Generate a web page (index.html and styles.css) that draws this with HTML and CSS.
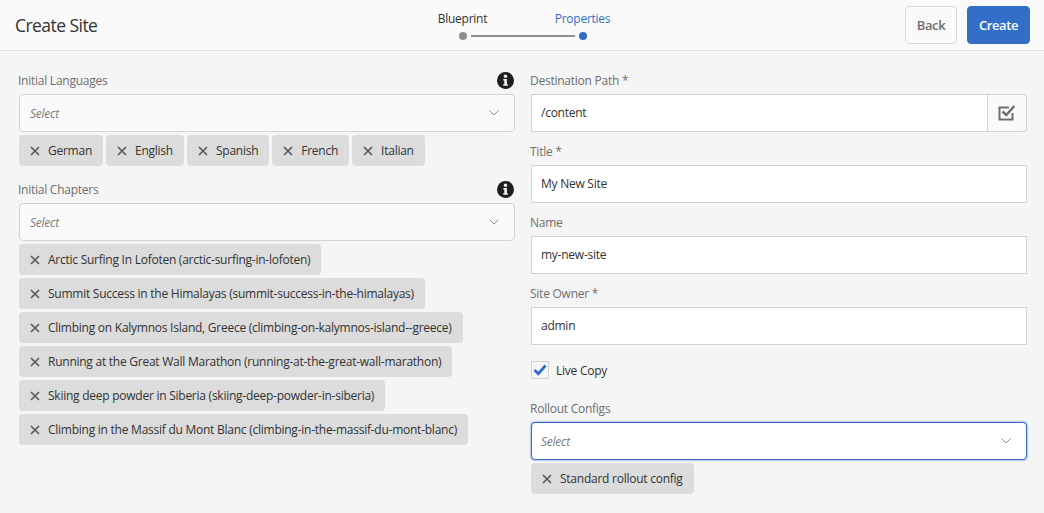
FILE: index.html
```html
<!DOCTYPE html>
<html lang="en">
<head>
    <meta charset="UTF-8">
    <meta name="viewport" content="width=device-width, initial-scale=1.0">
    <title>Create Site</title>
    <link rel="stylesheet" href="styles.css">
</head>
<body>
    <svg class="sprites" width="0" height="0">
        <symbol id="x" viewBox="0 0 10 10"><path d="M1 1l8 8M9 1l-8 8" fill="none" stroke="currentColor" stroke-width="1.7"/></symbol>
        <symbol id="chevron" viewBox="0 0 10 6"><path d="M.5 .5L5 5 9.5 .5" fill="none" stroke="currentColor" stroke-width="1"/></symbol>
        <symbol id="info" viewBox="0 0 17 17"><circle cx="8.5" cy="8.5" r="8.5" fill="currentColor"/><circle cx="8.5" cy="4.3" r="1.7" fill="#f5f5f5"/><path d="M6.3 7h3.6v5.2h1v1.5H6.2v-1.5h1.1V8.5h-1z" fill="#f5f5f5"/></symbol>
    </svg>

    <header class="topbar">
        <h1 class="title">Create Site</h1>
        <div class="stepper">
            <div class="step">
                <span class="step-label">Blueprint</span>
                <span class="dot"></span>
            </div>
            <span class="step-line"></span>
            <div class="step active">
                <span class="step-label">Properties</span>
                <span class="dot"></span>
            </div>
        </div>
        <div class="actions">
            <button class="btn">Back</button>
            <button class="btn primary">Create</button>
        </div>
    </header>

    <main class="form">
        <section class="col">
            <div class="field-head">
                <label>Initial Languages</label>
                <svg class="info"><use href="#info"/></svg>
            </div>
            <div class="select">
                <span>Select</span>
                <svg class="chevron"><use href="#chevron"/></svg>
            </div>
            <div class="tags">
                <span class="tag"><svg class="x"><use href="#x"/></svg>German</span>
                <span class="tag"><svg class="x"><use href="#x"/></svg>English</span>
                <span class="tag"><svg class="x"><use href="#x"/></svg>Spanish</span>
                <span class="tag"><svg class="x"><use href="#x"/></svg>French</span>
                <span class="tag"><svg class="x"><use href="#x"/></svg>Italian</span>
            </div>

            <div class="field-head chapters">
                <label>Initial Chapters</label>
                <svg class="info"><use href="#info"/></svg>
            </div>
            <div class="select">
                <span>Select</span>
                <svg class="chevron"><use href="#chevron"/></svg>
            </div>
            <div class="tags">
                <span class="tag"><svg class="x"><use href="#x"/></svg>Arctic Surfing In Lofoten (arctic-surfing-in-lofoten)</span>
                <span class="tag"><svg class="x"><use href="#x"/></svg>Summit Success in the Himalayas (summit-success-in-the-himalayas)</span>
                <span class="tag"><svg class="x"><use href="#x"/></svg>Climbing on Kalymnos Island, Greece (climbing-on-kalymnos-island--greece)</span>
                <span class="tag"><svg class="x"><use href="#x"/></svg>Running at the Great Wall Marathon (running-at-the-great-wall-marathon)</span>
                <span class="tag"><svg class="x"><use href="#x"/></svg>Skiing deep powder in Siberia (skiing-deep-powder-in-siberia)</span>
                <span class="tag"><svg class="x"><use href="#x"/></svg>Climbing in the Massif du Mont Blanc (climbing-in-the-massif-du-mont-blanc)</span>
            </div>
        </section>

        <section class="col">
            <div class="field">
                <div class="field-head"><label>Destination Path *</label></div>
                <div class="path-group">
                    <div class="input">/content</div>
                    <button class="path-btn">
                        <svg width="18" height="16" viewBox="0 0 18 16"><path d="M14.500 8V14.500H1.500V2.500H11" fill="none" stroke="#6e6e6e" stroke-width="2"/><path d="M4.500 6.500l3.800 3.500 8-9" fill="none" stroke="#6e6e6e" stroke-width="2.400"/></svg>
                    </button>
                </div>
            </div>
            <div class="field">
                <div class="field-head"><label>Title *</label></div>
                <div class="input">My New Site</div>
            </div>
            <div class="field">
                <div class="field-head"><label>Name</label></div>
                <div class="input">my-new-site</div>
            </div>
            <div class="field">
                <div class="field-head"><label>Site Owner *</label></div>
                <div class="input">admin</div>
            </div>
            <div class="checkbox">
                <span class="box">
                    <svg width="14" height="12" viewBox="0 0 14 12"><path d="M1.500 6l3.800 3.800L12.500 1.500" fill="none" stroke="#326ec8" stroke-width="2.800"/></svg>
                </span>
                Live Copy
            </div>
            <div class="field-head rollout"><label>Rollout Configs</label></div>
            <div class="select focused">
                <span>Select</span>
                <svg class="chevron"><use href="#chevron"/></svg>
            </div>
            <div class="tags">
                <span class="tag"><svg class="x"><use href="#x"/></svg>Standard rollout config</span>
            </div>
        </section>
    </main>
</body>
</html>
```

FILE: styles.css
```css
/* Basic Reset */
* {
    margin: 0;
    padding: 0;
    box-sizing: border-box;
}

body {
    font-family: "Open Sans", sans-serif;
    font-size: 12px;
    letter-spacing: -0.25px;
    background-color: #f5f5f5;
    color: #4b4b4b;
    overflow: hidden;
}

.sprites {
    position: absolute;
}

/* Top bar */
.topbar {
    display: grid;
    grid-template-columns: 1fr auto 1fr;
    align-items: center;
    height: 51px;
    padding: 0 14px 1px 15px;
    background-color: #fafafa;
    border-bottom: 1px solid #e1e1e1;
}

.title {
    font-size: 17.5px;
    font-weight: 400;
    letter-spacing: -0.55px;
    color: #323232;
}

.stepper {
    display: flex;
    align-items: flex-end;
    align-self: start;
    height: 30px;
    margin-top: 10px;
}

.step {
    display: flex;
    flex-direction: column;
    align-items: center;
    width: 70px;
    margin: 0 -27px;
    gap: 5px;
}

.step-label {
    line-height: 17px;
    color: #323232;
}

.step.active .step-label {
    color: #326ec8;
}

.dot {
    width: 8px;
    height: 8px;
    border-radius: 50%;
    background-color: #8e8e8e;
}

.step.active .dot {
    background-color: #326ec8;
}

.step-line {
    width: 104px;
    height: 2px;
    margin-bottom: 3px;
    background-color: #8e8e8e;
}

.actions {
    display: flex;
    justify-content: flex-end;
    gap: 10px;
}

.btn {
    height: 38px;
    width: 52px;
    font-family: inherit;
    font-size: 13px;
    font-weight: 600;
    letter-spacing: -0.4px;
    color: #6e6e6e;
    background-color: #fafafa;
    border: 1px solid #d9d9d9;
    border-radius: 4px;
}

.btn.primary {
    width: 63px;
    color: #fff;
    background-color: #326ec8;
    border-color: #326ec8;
}

/* Form */
.form {
    display: grid;
    grid-template-columns: 496px 496px;
    gap: 16px;
    padding: 19px 0 0 19px;
}

.field {
    margin-bottom: 9px;
}

.field-head {
    display: flex;
    justify-content: space-between;
    align-items: center;
    height: 20px;
    margin-bottom: 4px;
    margin-left: -1px;
    color: #6e6e6e;
}

.field-head.chapters {
    margin-top: 13px;
}

.field-head.rollout {
    margin-top: 19px;
    margin-bottom: 4px;
}

.info {
    width: 17px;
    height: 17px;
    margin-right: 1px;
    color: #1e1e1e;
}

.select {
    display: flex;
    justify-content: space-between;
    align-items: center;
    height: 38px;
    padding: 0 15px 0 10px;
    background-color: #fafafa;
    border: 1px solid #d3d3d3;
    border-radius: 4px;
    font-style: italic;
    color: #7a7a7a;
}

.select.focused {
    padding-left: 9px;
    background-color: #fff;
    border-color: #326ec8;
    box-shadow: 0 0 2px #326ec8;
}

.chevron {
    width: 10px;
    height: 6px;
    color: #8a8a8a;
}

.tags {
    display: flex;
    flex-wrap: wrap;
    gap: 3px;
    margin-top: 3px;
}

.tag {
    display: flex;
    align-items: center;
    height: 31px;
    padding: 0 11px;
    background-color: #dcdcdc;
    border-radius: 4px;
    color: #323232;
}

.x {
    width: 10px;
    height: 10px;
    margin-right: 8px;
    color: #5a5a5a;
}

.input {
    flex: 1;
    display: flex;
    align-items: center;
    height: 38px;
    padding: 0 9px 2px;
    background-color: #fff;
    border: 1px solid #d3d3d3;
    color: #323232;
}

.path-group {
    display: flex;
}

.path-btn {
    display: flex;
    align-items: center;
    justify-content: center;
    width: 39px;
    height: 38px;
    background-color: #fafafa;
    border: 1px solid #d3d3d3;
    border-left: 0;
    border-radius: 0 4px 4px 0;
}

.checkbox {
    display: flex;
    align-items: center;
    gap: 7px;
    height: 18px;
    margin-top: 16px;
    color: #323232;
}

.box {
    display: flex;
    align-items: center;
    justify-content: center;
    width: 18px;
    height: 18px;
    background-color: #f5f5f5;
    border: 1px solid #d3d3d3;
}
```
